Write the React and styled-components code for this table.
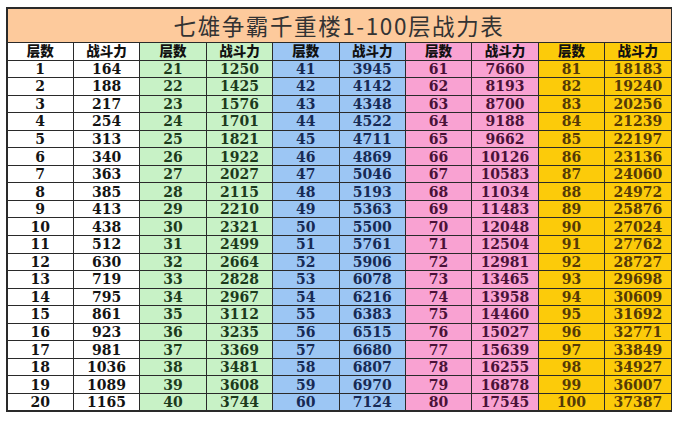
import React from "react";
import styled, { createGlobalStyle } from "styled-components";

const Global = createGlobalStyle`
  html, body { margin: 0; padding: 0; background: #ffffff; }
  body { width: 679px; height: 423px; overflow: hidden; }
`;

const groups = [
  { bg: "#ffffff", fg: "#141414", values: [164,188,217,254,313,340,363,385,413,438,512,630,719,795,861,923,981,1036,1089,1165] },
  { bg: "#c8f2c6", fg: "#1c3a1c", values: [1250,1425,1576,1701,1821,1922,2027,2115,2210,2321,2499,2664,2828,2967,3112,3235,3369,3481,3608,3744] },
  { bg: "#9cc6f4", fg: "#172a55", values: [3945,4142,4348,4522,4711,4869,5046,5193,5363,5500,5761,5906,6078,6216,6383,6515,6680,6807,6970,7124] },
  { bg: "#f9a2d2", fg: "#4a1238", values: [7660,8193,8700,9188,9662,10126,10583,11034,11483,12048,12504,12981,13465,13958,14460,15027,15639,16255,16878,17545] },
  { bg: "#fccb0a", fg: "#553a06", values: [18183,19240,20256,21239,22197,23136,24060,24972,25876,27024,27762,28727,29698,30609,31692,32771,33849,34927,36007,37387] },
];

const Page = styled.div`
  padding: 7px 0 0 6px;
`;

const Table = styled.div`
  width: 666px;
  height: 405px;
  box-sizing: border-box;
  display: grid;
  grid-template-columns: repeat(10, 1fr);
  grid-template-rows: 33px 17px repeat(20, 1fr);
  gap: 1px;
  padding: 1.5px;
  background: #2a2a2a;
`;

const Title = styled.div`
  grid-column: 1 / -1;
  background: #fdca9c;
  display: flex;
  align-items: center;
  justify-content: center;
  font-family: "Noto Sans CJK SC", "Noto Sans", sans-serif;
  font-weight: 400;
  font-size: 22.5px;
  line-height: 1;
  color: #333333;
  letter-spacing: 1.6px;
`;

const Head = styled.div`
  background: ${(p) => p.$bg};
  display: flex;
  align-items: center;
  justify-content: center;
  font-family: "Noto Sans CJK SC", sans-serif;
  font-weight: 900;
  font-size: 13.5px;
  line-height: 1;
  color: #111;
`;

const Cell = styled.div`
  background: ${(p) => p.$bg};
  color: ${(p) => p.$fg};
  display: flex;
  align-items: center;
  justify-content: center;
  font-family: "DejaVu Serif", "Liberation Serif", serif;
  font-weight: bold;
  font-size: 14px;
  line-height: 1;
`;

export default function App() {
  const rows = Array.from({ length: 20 }, (_, i) => i);
  return (
    <Page>
      <Global />
      <Table>
        <Title>七雄争霸千重楼1-100层战力表</Title>
        {groups.map((g, gi) => (
          <React.Fragment key={"h" + gi}>
            <Head $bg={g.bg}>层数</Head>
            <Head $bg={g.bg}>战斗力</Head>
          </React.Fragment>
        ))}
        {rows.map((r) =>
          groups.map((g, gi) => (
            <React.Fragment key={r + "-" + gi}>
              <Cell $bg={g.bg} $fg={g.fg}>{gi * 20 + r + 1}</Cell>
              <Cell $bg={g.bg} $fg={g.fg}>{g.values[r]}</Cell>
            </React.Fragment>
          ))
        )}
      </Table>
    </Page>
  );
}
